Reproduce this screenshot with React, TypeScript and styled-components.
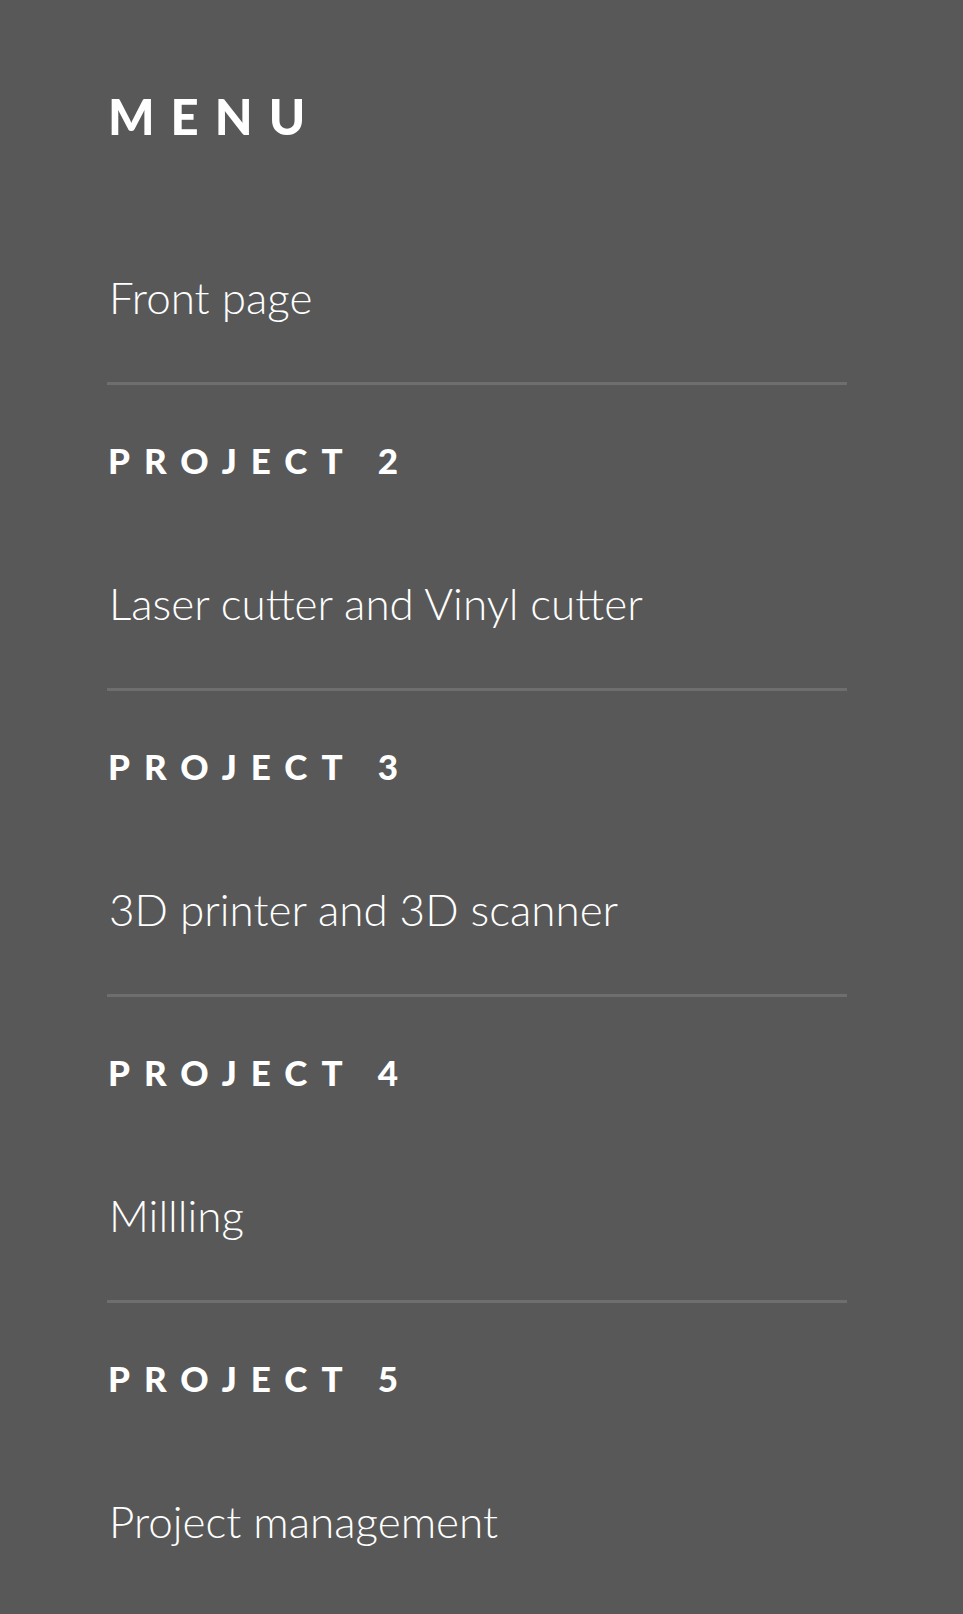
import React from "react";
import styled, { createGlobalStyle } from "styled-components";

const Global = createGlobalStyle`
  html, body {
    margin: 0;
    padding: 0;
    background: #585858;
  }
  body {
    font-family: Lato, "Open Sans", sans-serif;
    color: #ffffff;
  }
`;

const Nav = styled.nav`
  box-sizing: border-box;
  width: 963px;
  min-height: 1614px;
  padding: 92px 116px 0 107px;
  display: flex;
  flex-direction: column;
`;

const Title = styled.h2`
  margin: 0 0 0 1px;
  font-family: Lato, sans-serif;
  font-weight: 900;
  font-size: 49px;
  line-height: 49px;
  letter-spacing: 16px;
  text-transform: uppercase;
`;

const List = styled.ul`
  list-style: none;
  margin: 134px 0 0 0;
  padding: 0;
  display: flex;
  flex-direction: column;
`;

const Item = styled.li<{ $first?: boolean; $last?: boolean }>`
  display: flex;
  flex-direction: column;
  padding: ${(p) => (p.$first ? "0" : "58px")} 0 63px 0;
  border-bottom: ${(p) => (p.$last ? "none" : "3px solid #6e6e6e")};
`;

const Heading = styled.h3`
  margin: 0 0 103px 1px;
  font-family: Lato, sans-serif;
  font-weight: 900;
  font-size: 35px;
  line-height: 35px;
  letter-spacing: 14px;
  text-transform: uppercase;
`;

const Link = styled.a`
  display: block;
  margin-left: 2px;
  font-family: Lato, sans-serif;
  font-weight: 300;
  font-size: 44px;
  line-height: 44px;
  color: #ffffff;
  text-decoration: none;
`;

type Entry = { heading?: string; label: string };

const entries: Entry[] = [
  { label: "Front page" },
  { heading: "Project 2", label: "Laser cutter and Vinyl cutter" },
  { heading: "Project 3", label: "3D printer and 3D scanner" },
  { heading: "Project 4", label: "Millling" },
  { heading: "Project 5", label: "Project management" },
];

export default function App() {
  return (
    <>
      <Global />
      <Nav>
        <Title>Menu</Title>
        <List>
          {entries.map((e, i) => (
            <Item key={i} $first={i === 0} $last={i === entries.length - 1}>
              {e.heading && <Heading>{e.heading}</Heading>}
              <Link href="#">{e.label}</Link>
            </Item>
          ))}
        </List>
      </Nav>
    </>
  );
}
